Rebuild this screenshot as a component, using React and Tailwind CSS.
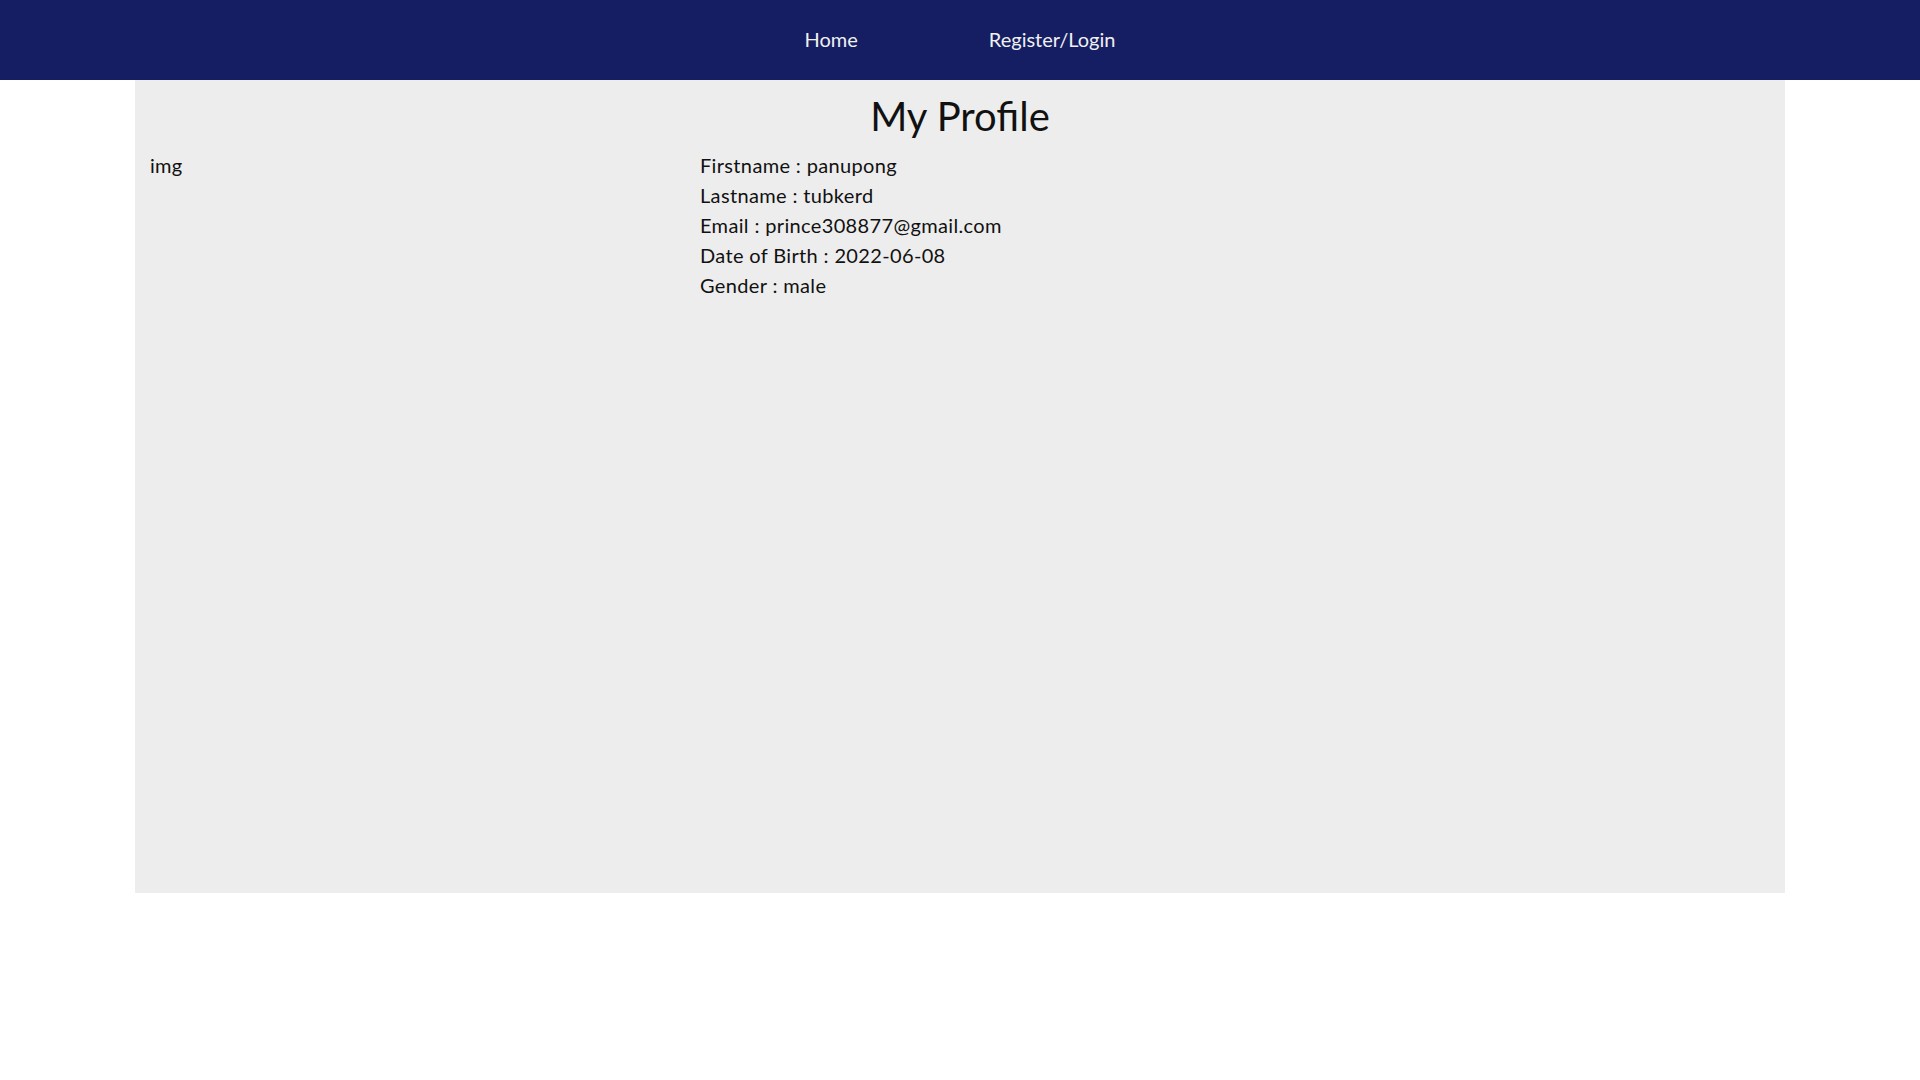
export default function App() {
  const font = { fontFamily: 'Lato, "Open Sans", sans-serif' };
  return (
    <div className="min-h-screen bg-white text-[#111]" style={font}>
      <nav className="h-[80px] bg-[#151e62] flex items-center justify-center gap-[131px] pb-[2px]">
        <a className="text-[20px] leading-[24px] text-[#f0f0f0]">Home</a>
        <a className="text-[20px] leading-[24px] text-[#f0f0f0]">Register/Login</a>
      </nav>
      <div className="mx-auto w-[1650px] h-[813px] bg-[#ededed] px-[15px]">
        <h1 className="pt-[12px] text-center text-[40px] leading-[48px] text-[#111]">My Profile</h1>
        <div className="mt-[10px] flex">
          <div className="w-[550px] text-[20px] leading-[30px] tracking-[0.3px]">img</div>
          <div className="flex flex-col text-[20px] leading-[30px] tracking-[0.35px]">
            <div>Firstname : panupong</div>
            <div>Lastname : tubkerd</div>
            <div>Email : prince308877@gmail.com</div>
            <div>Date of Birth : 2022-06-08</div>
            <div>Gender : male</div>
          </div>
        </div>
      </div>
    </div>
  );
}
